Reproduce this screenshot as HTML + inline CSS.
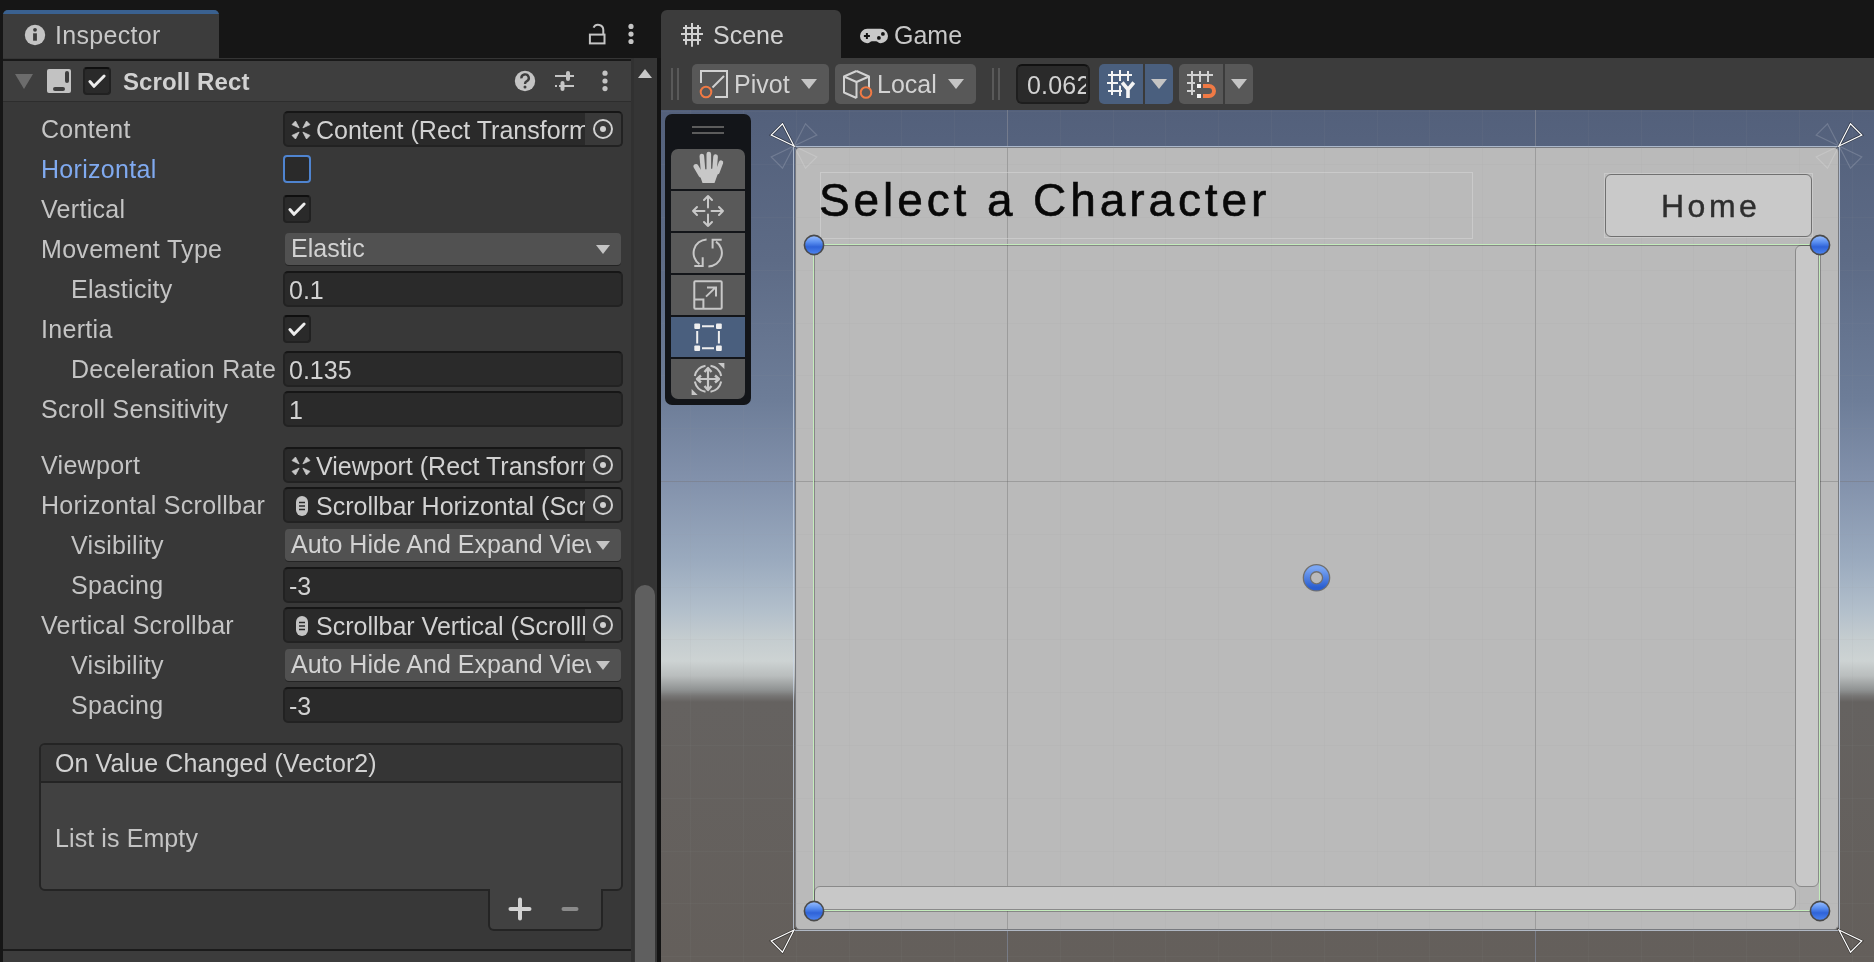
<!DOCTYPE html>
<html><head><meta charset="utf-8">
<style>
*{box-sizing:border-box;margin:0;padding:0}
html,body{width:1874px;height:962px;overflow:hidden;background:#161616;font-family:"Liberation Sans",sans-serif}
.a{position:absolute}
#root{position:absolute;left:0;top:0;width:1874px;height:962px;will-change:transform}
.t{position:absolute;height:40px;line-height:40px;font-size:25px;white-space:nowrap;color:#c4c4c4;letter-spacing:0.3px}
.lbl{left:41px}
.ind{left:71px}
.fld{position:absolute;left:283px;width:340px;height:36px;background:#2a2a2a;border:2px solid #222;border-top-color:#161616;border-radius:5px;overflow:hidden}
.fld .v{position:absolute;left:4px;top:-3px;height:40px;line-height:40px;font-size:25px;color:#d2d2d2;white-space:nowrap}
.obj .v{left:31px}
.pick{position:absolute;right:0;top:0;width:36px;height:32px;background:#393939}
.pick:before{content:"";position:absolute;left:8px;top:6px;width:20px;height:20px;border:2px solid #d0d0d0;border-radius:50%;box-sizing:border-box}
.pick:after{content:"";position:absolute;left:15px;top:13px;width:6px;height:6px;background:#d0d0d0;border-radius:50%}
.dd{position:absolute;left:285px;width:336px;height:32px;background:#515151;border-radius:4px;box-shadow:0 1px 0 #242424;overflow:hidden}
.dd .v{position:absolute;left:6px;top:-5px;height:40px;line-height:40px;font-size:25px;color:#d2d2d2;white-space:nowrap;width:300px;overflow:hidden}
.arr{position:absolute;width:0;height:0;border-left:7px solid transparent;border-right:7px solid transparent;border-top:9px solid #c4c4c4}
.dd .arr{left:311px;top:12px}
.cb{position:absolute;left:283px;width:28px;height:28px;background:#2a2a2a;border:2px solid #212121;border-top-color:#0f0f0f;border-radius:4px}
.cb svg{position:absolute;left:0;top:0}
</style></head><body><div id="root">

<!-- ============ INSPECTOR ============ -->
<!-- tab -->
<div class="a" style="left:3px;top:10px;width:216px;height:48px;background:#3c3c3c;border-radius:5px 5px 0 0;overflow:hidden">
  <div class="a" style="left:0;top:0;width:216px;height:4px;background:#3a6190"></div>
</div>
<svg class="a" style="left:24px;top:24px" width="22" height="22" viewBox="0 0 22 22">
  <circle cx="11" cy="11" r="10.2" fill="#c4c4c4"/>
  <circle cx="11" cy="5.8" r="1.9" fill="#3c3c3c"/>
  <rect x="9.1" y="9.3" width="3.8" height="7.4" fill="#3c3c3c"/>
</svg>
<div class="t" style="left:55px;top:15px;color:#c8c8c8">Inspector</div>
<!-- lock -->
<svg class="a" style="left:586px;top:22px" width="22" height="24" viewBox="0 0 22 24">
  <rect x="3.9" y="12.6" width="14.6" height="8.8" fill="none" stroke="#c4c4c4" stroke-width="2"/>
  <path d="M7.5 5.6 A5.2 5.2 0 0 1 17.3 8 V12.6" fill="none" stroke="#c4c4c4" stroke-width="2"/>
</svg>
<!-- kebab tab -->
<svg class="a" style="left:626px;top:22px" width="10" height="24" viewBox="0 0 10 24">
  <circle cx="5" cy="4.4" r="2.6" fill="#c4c4c4"/><circle cx="5" cy="12.1" r="2.6" fill="#c4c4c4"/><circle cx="5" cy="19.5" r="2.6" fill="#c4c4c4"/>
</svg>

<!-- panel -->
<div class="a" style="left:3px;top:58px;width:628px;height:904px;background:#383838"></div>
<div class="a" style="left:3px;top:58px;width:628px;height:1px;background:#353535"></div>
<div class="a" style="left:3px;top:59px;width:628px;height:2px;background:#191919"></div>
<!-- header -->
<div class="a" style="left:3px;top:61px;width:628px;height:40px;background:#3e3e3e"></div>
<div class="a" style="left:3px;top:101px;width:628px;height:1px;background:#2d2d2d"></div>
<!-- scrollbar column -->
<div class="a" style="left:631px;top:58px;width:26px;height:904px;background:#353535"></div>
<div class="a" style="left:631px;top:58px;width:3px;height:904px;background:#313131"></div>
<div class="arr" style="left:638px;top:69px;border-top:0;border-bottom:9px solid #c8c8c8"></div>
<div class="a" style="left:635px;top:585px;width:20px;height:377px;background:#5f5f5f;border-radius:10px 10px 0 0"></div>
<!-- splitter -->
<div class="a" style="left:657px;top:58px;width:4px;height:904px;background:#131313"></div>

<!-- header content -->
<div class="a" style="left:15px;top:74px;width:0;height:0;border-left:9px solid transparent;border-right:9px solid transparent;border-top:15px solid #6c6c6c"></div>
<svg class="a" style="left:47px;top:69px" width="24" height="24" viewBox="0 0 24 24">
  <rect x="0" y="0" width="24" height="24" rx="2" fill="#c2c2c2"/>
  <rect x="18" y="2" width="4" height="12" rx="2" fill="#3e3e3e"/>
  <rect x="6" y="18" width="12" height="4" rx="2" fill="#3e3e3e"/>
</svg>
<div class="cb" style="left:83px;top:67px;width:28px;height:28px">
  <svg width="24" height="24" viewBox="0 0 24 24"><path d="M4.9 12.6 L9 17.3 L19.1 7" fill="none" stroke="#ececec" stroke-width="3" stroke-linecap="round" stroke-linejoin="round"/></svg>
</div>
<div class="t" style="left:123px;top:62px;font-weight:bold;font-size:24px;letter-spacing:0.1px;color:#d2d2d2">Scroll Rect</div>
<svg class="a" style="left:514px;top:70px" width="22" height="22" viewBox="0 0 22 22">
  <circle cx="11" cy="11" r="10.2" fill="#c4c4c4"/>
  <path d="M7.4 8.3 A3.7 3.6 0 1 1 12.6 11.3 C11.4 12 11 12.6 11 14" fill="none" stroke="#3e3e3e" stroke-width="2.4"/>
  <circle cx="11" cy="17" r="1.5" fill="#3e3e3e"/>
</svg>
<svg class="a" style="left:554px;top:70px" width="22" height="22" viewBox="0 0 22 22">
  <path d="M1 6 H20 M1 16 H20" stroke="#c4c4c4" stroke-width="2"/>
  <rect x="12" y="1" width="4" height="10" rx="2" fill="#c4c4c4"/>
  <rect x="6.5" y="11" width="4" height="10" rx="2" fill="#c4c4c4"/>
  <rect x="3" y="15" width="2" height="2" fill="#3e3e3e"/>
</svg>
<svg class="a" style="left:600px;top:70px" width="10" height="22" viewBox="0 0 10 22">
  <circle cx="5" cy="3.2" r="2.6" fill="#c4c4c4"/><circle cx="5" cy="11" r="2.6" fill="#c4c4c4"/><circle cx="5" cy="18.6" r="2.6" fill="#c4c4c4"/>
</svg>

<!-- rows -->
<div class="t lbl" style="top:109px">Content</div>
<div class="fld obj" style="top:111px"><svg class="a" style="left:6px;top:7px" width="20" height="20" viewBox="0 0 20 20"><path d="M4.5 1 L1 4.6 L8.1 7.9 Z M15.5 1 L19 4.6 L11.9 7.9 Z M1 15.4 L4.5 19 L8.1 12.1 Z M19 15.4 L15.5 19 L11.9 12.1 Z" fill="#c8c8c8" stroke="#c8c8c8" stroke-width="0.8" stroke-linejoin="round"/></svg><div class="v">Content (Rect Transform)</div><div class="pick"></div></div>

<div class="t lbl" style="top:149px;color:#80aaf0">Horizontal</div>
<div class="cb" style="top:155px;border:2px solid #4f84d0;background:#2a2a2a"></div>

<div class="t lbl" style="top:189px">Vertical</div>
<div class="cb" style="top:195px"><svg width="24" height="24" viewBox="0 0 24 24"><path d="M4.9 12.6 L9 17.3 L19.1 7" fill="none" stroke="#ececec" stroke-width="3" stroke-linecap="round" stroke-linejoin="round"/></svg></div>

<div class="t lbl" style="top:229px">Movement Type</div>
<div class="dd" style="top:233px"><div class="v">Elastic</div><div class="arr"></div></div>

<div class="t ind" style="top:269px">Elasticity</div>
<div class="fld" style="top:271px"><div class="v">0.1</div></div>

<div class="t lbl" style="top:309px">Inertia</div>
<div class="cb" style="top:315px"><svg width="24" height="24" viewBox="0 0 24 24"><path d="M4.9 12.6 L9 17.3 L19.1 7" fill="none" stroke="#ececec" stroke-width="3" stroke-linecap="round" stroke-linejoin="round"/></svg></div>

<div class="t ind" style="top:349px">Deceleration Rate</div>
<div class="fld" style="top:351px"><div class="v">0.135</div></div>

<div class="t lbl" style="top:389px">Scroll Sensitivity</div>
<div class="fld" style="top:391px"><div class="v">1</div></div>

<div class="t lbl" style="top:445px">Viewport</div>
<div class="fld obj" style="top:447px"><svg class="a" style="left:6px;top:7px" width="20" height="20" viewBox="0 0 20 20"><path d="M4.5 1 L1 4.6 L8.1 7.9 Z M15.5 1 L19 4.6 L11.9 7.9 Z M1 15.4 L4.5 19 L8.1 12.1 Z M19 15.4 L15.5 19 L11.9 12.1 Z" fill="#c8c8c8" stroke="#c8c8c8" stroke-width="0.8" stroke-linejoin="round"/></svg><div class="v">Viewport (Rect Transform)</div><div class="pick"></div></div>

<div class="t lbl" style="top:485px">Horizontal Scrollbar</div>
<div class="fld obj" style="top:487px"><svg class="a" style="left:10px;top:6px" width="14" height="22" viewBox="0 0 14 22"><rect x="1" y="1" width="12" height="20" rx="6" fill="#c4c4c4"/><path d="M4 7.5 H10 M4 11 H10 M4 14.5 H10" stroke="#2a2a2a" stroke-width="1.6"/></svg><div class="v">Scrollbar Horizontal (Scrollbar)</div><div class="pick"></div></div>

<div class="t ind" style="top:525px">Visibility</div>
<div class="dd" style="top:529px"><div class="v">Auto Hide And Expand Viewport</div><div class="arr"></div></div>

<div class="t ind" style="top:565px">Spacing</div>
<div class="fld" style="top:567px"><div class="v">-3</div></div>

<div class="t lbl" style="top:605px">Vertical Scrollbar</div>
<div class="fld obj" style="top:607px"><svg class="a" style="left:10px;top:6px" width="14" height="22" viewBox="0 0 14 22"><rect x="1" y="1" width="12" height="20" rx="6" fill="#c4c4c4"/><path d="M4 7.5 H10 M4 11 H10 M4 14.5 H10" stroke="#2a2a2a" stroke-width="1.6"/></svg><div class="v">Scrollbar Vertical (Scrollbar)</div><div class="pick"></div></div>

<div class="t ind" style="top:645px">Visibility</div>
<div class="dd" style="top:649px"><div class="v">Auto Hide And Expand Viewport</div><div class="arr"></div></div>

<div class="t ind" style="top:685px">Spacing</div>
<div class="fld" style="top:687px"><div class="v">-3</div></div>

<!-- event list -->
<div class="a" style="left:39px;top:743px;width:584px;height:148px;background:#414141;border:2px solid #242424;border-radius:6px;overflow:hidden">
  <div class="a" style="left:0;top:0;width:580px;height:38px;background:#353535;border-bottom:2px solid #242424"></div>
</div>
<div class="t" style="left:55px;top:743px;color:#d2d2d2;letter-spacing:0.1px">On Value Changed (Vector2)</div>
<div class="t" style="left:55px;top:818px;letter-spacing:0.1px">List is Empty</div>
<div class="a" style="left:488px;top:889px;width:115px;height:42px;background:#414141;border:2px solid #242424;border-top:0;border-radius:0 0 6px 6px"></div>
<svg class="a" style="left:508px;top:897px" width="24" height="24" viewBox="0 0 24 24"><path d="M2.5 12 H21.5 M12 2.5 V21.5" stroke="#d2d2d2" stroke-width="4" stroke-linecap="round"/></svg>
<svg class="a" style="left:560px;top:905px" width="20" height="8" viewBox="0 0 20 8"><path d="M3.5 4 H16.5" stroke="#8a8a8a" stroke-width="4" stroke-linecap="round"/></svg>
<div class="a" style="left:3px;top:949px;width:628px;height:2px;background:#1b1b1b"></div>
<div class="a" style="left:3px;top:951px;width:628px;height:11px;background:#3c3c3c"></div>


<!-- ============ SCENE ============ -->
<div class="a" style="left:661px;top:10px;width:180px;height:48px;background:#3c3c3c;border-radius:6px 6px 0 0"></div>
<svg class="a" style="left:676px;top:18px" width="32" height="32" viewBox="0 0 32 32">
  <path d="M10 7 V26.8 M16 5 V28.8 M22 7 V26.8 M7 10 H25 M5 16 H27 M7 22 H25" stroke="#d2d2d2" stroke-width="2"/>
</svg>
<div class="t" style="left:713px;top:15px;color:#d2d2d2;letter-spacing:0">Scene</div>
<svg class="a" style="left:858px;top:27px" width="32" height="18" viewBox="0 0 32 18">
  <path d="M9.2 1.8 H22.8 A7.2 7.2 0 0 1 22.8 16.2 C20.5 16.2 19.5 14.2 18 14.2 H14 C12.5 14.2 11.5 16.2 9.2 16.2 A7.2 7.2 0 0 1 9.2 1.8 Z" fill="#c8c8c8"/>
  <path d="M5.9 9 H11.9 M8.9 6 V12" stroke="#111" stroke-width="2"/>
  <circle cx="24.9" cy="6.9" r="1.9" fill="#111"/><circle cx="20.9" cy="10.9" r="1.9" fill="#111"/>
</svg>
<div class="t" style="left:894px;top:15px;color:#c8c8c8;letter-spacing:0">Game</div>

<!-- toolbar -->
<div class="a" style="left:661px;top:58px;width:1213px;height:52px;background:#3c3c3c"></div>
<div class="a" style="left:671px;top:68px;width:2px;height:32px;background:#595959"></div>
<div class="a" style="left:677px;top:68px;width:2px;height:32px;background:#595959"></div>
<div class="a" style="left:992px;top:68px;width:2px;height:32px;background:#595959"></div>
<div class="a" style="left:998px;top:68px;width:2px;height:32px;background:#595959"></div>

<div class="a" style="left:692px;top:64px;width:137px;height:40px;background:#585858;border-radius:5px"></div>
<svg class="a" style="left:692px;top:64px" width="137" height="40" viewBox="0 0 137 40">
  <path d="M9 19 V7 H35 V33 H23" fill="none" stroke="#d2d2d2" stroke-width="2"/>
  <path d="M20.5 23.5 L32 12" stroke="#d2d2d2" stroke-width="2"/>
  <circle cx="14" cy="28" r="5.3" fill="none" stroke="#f07a45" stroke-width="2"/>
</svg>
<div class="t" style="left:734px;top:64px;color:#d2d2d2;letter-spacing:0">Pivot</div>
<div class="arr" style="left:801px;top:79px;border-left-width:8px;border-right-width:8px;border-top-width:10px"></div>

<div class="a" style="left:835px;top:64px;width:141px;height:40px;background:#585858;border-radius:5px"></div>
<svg class="a" style="left:835px;top:64px" width="40" height="40" viewBox="0 0 40 40">
  <path d="M21.5 7 L34 12.5 V25 M21.5 7 L9 12.5 V28.5 L21.5 34 M9 12.5 L21.5 18 L34 12.5 M21.5 18 V34" fill="none" stroke="#d2d2d2" stroke-width="2" stroke-linejoin="round"/>
  <circle cx="31" cy="28.5" r="5.3" fill="#585858" stroke="#f07a45" stroke-width="2"/>
</svg>
<div class="t" style="left:877px;top:64px;color:#d2d2d2;letter-spacing:0">Local</div>
<div class="arr" style="left:948px;top:79px;border-left-width:8px;border-right-width:8px;border-top-width:10px"></div>

<div class="a" style="left:1016px;top:64px;width:74px;height:40px;background:#2a2a2a;border:2px solid #1e1e1e;border-top-color:#111;border-radius:6px;overflow:hidden">
  <div class="a" style="left:9px;top:-1px;height:40px;line-height:40px;font-size:25px;color:#d2d2d2;white-space:nowrap;width:59px;overflow:hidden;letter-spacing:0.2px">0.0625</div>
</div>

<div class="a" style="left:1099px;top:64px;width:44px;height:40px;background:#4a5f7e;border-radius:5px 0 0 5px"></div>
<div class="a" style="left:1143px;top:64px;width:2px;height:40px;background:#3a3a3a"></div>
<div class="a" style="left:1145px;top:64px;width:28px;height:40px;background:#4a5f7e;border-radius:0 5px 5px 0"></div>
<svg class="a" style="left:1099px;top:64px" width="44" height="40" viewBox="0 0 44 40">
  <path d="M13 7 V31 M21 6 V17 M21 21.5 V32 M29 7 V17 M9 11 H33 M8 19 H19 M9 27 H23" stroke="#f4f4f4" stroke-width="2"/>
  <path d="M23.2 18.5 L29 25.5 L34.8 18.5 M29 25.5 V34" fill="none" stroke="#4a5f7e" stroke-width="6.4"/>
  <path d="M23.2 18.5 L29 25.5 L34.8 18.5 M29 25.5 V34" fill="none" stroke="#f4f4f4" stroke-width="3.6"/>
</svg>
<div class="arr" style="left:1151px;top:79px;border-left-width:8px;border-right-width:8px;border-top-width:10px"></div>

<div class="a" style="left:1179px;top:64px;width:44px;height:40px;background:#585858;border-radius:5px 0 0 5px"></div>
<div class="a" style="left:1223px;top:64px;width:2px;height:40px;background:#3c3c3c"></div>
<div class="a" style="left:1225px;top:64px;width:28px;height:40px;background:#585858;border-radius:0 5px 5px 0"></div>
<svg class="a" style="left:1179px;top:64px" width="44" height="40" viewBox="0 0 44 40">
  <path d="M13 7 V31 M21 7 V18 M29 7 V18 M8 11 H34 M8 19 H16 M8 27 H16" stroke="#d2d2d2" stroke-width="2"/>
  <rect x="18" y="20" width="4" height="4" fill="#f4f4f4"/><rect x="18" y="30" width="4" height="4" fill="#f4f4f4"/>
  <path d="M24 22 H30 A5 5 0 0 1 30 32 H24" fill="none" stroke="#f07a45" stroke-width="4"/>
</svg>
<div class="arr" style="left:1231px;top:79px;border-left-width:8px;border-right-width:8px;border-top-width:10px"></div>

<!-- scene view -->
<div class="a" style="left:661px;top:110px;width:1213px;height:852px;overflow:hidden;background:linear-gradient(to bottom,#53607b 0px,#5d6b86 150px,#6d7d98 290px,#8291ab 370px,#9aaabe 450px,#b2bfcb 500px,#c4cccf 528px,#cdd3d3 551px,#b9bdbd 566px,#8f9292 580px,#767574 586px,#656260 592px,#645f5b 852px)">
</div>


<!-- canvas panel -->
<div class="a" style="left:795px;top:147px;width:1044px;height:783px;background:#bababa;border:1px solid rgba(40,45,55,0.45);border-radius:5px"></div>
<div class="a" style="left:793px;top:146px;width:1047px;height:785px;border:1px solid rgba(200,212,230,0.75)"></div>
<!-- grid -->
<div class="a" style="left:690px;top:110px;width:1px;height:852px;background:rgba(150,150,150,0.07)"></div>
<div class="a" style="left:743px;top:110px;width:1px;height:852px;background:rgba(150,150,150,0.07)"></div>
<div class="a" style="left:796px;top:110px;width:1px;height:852px;background:rgba(150,150,150,0.07)"></div>
<div class="a" style="left:849px;top:110px;width:1px;height:852px;background:rgba(150,150,150,0.07)"></div>
<div class="a" style="left:901px;top:110px;width:1px;height:852px;background:rgba(150,150,150,0.07)"></div>
<div class="a" style="left:954px;top:110px;width:1px;height:852px;background:rgba(150,150,150,0.07)"></div>
<div class="a" style="left:1007px;top:110px;width:1px;height:36px;background:rgba(124,130,145,0.8)"></div>
<div class="a" style="left:1007px;top:931px;width:1px;height:31px;background:rgba(124,130,145,0.8)"></div>
<div class="a" style="left:1007px;top:148px;width:1px;height:781px;background:rgba(100,100,100,0.35)"></div>
<div class="a" style="left:1060px;top:110px;width:1px;height:852px;background:rgba(150,150,150,0.07)"></div>
<div class="a" style="left:1113px;top:110px;width:1px;height:852px;background:rgba(150,150,150,0.07)"></div>
<div class="a" style="left:1165px;top:110px;width:1px;height:852px;background:rgba(150,150,150,0.07)"></div>
<div class="a" style="left:1218px;top:110px;width:1px;height:852px;background:rgba(150,150,150,0.07)"></div>
<div class="a" style="left:1271px;top:110px;width:1px;height:852px;background:rgba(150,150,150,0.07)"></div>
<div class="a" style="left:1324px;top:110px;width:1px;height:852px;background:rgba(150,150,150,0.07)"></div>
<div class="a" style="left:1377px;top:110px;width:1px;height:852px;background:rgba(150,150,150,0.07)"></div>
<div class="a" style="left:1429px;top:110px;width:1px;height:852px;background:rgba(150,150,150,0.07)"></div>
<div class="a" style="left:1482px;top:110px;width:1px;height:852px;background:rgba(150,150,150,0.07)"></div>
<div class="a" style="left:1535px;top:110px;width:1px;height:36px;background:rgba(124,130,145,0.8)"></div>
<div class="a" style="left:1535px;top:931px;width:1px;height:31px;background:rgba(124,130,145,0.8)"></div>
<div class="a" style="left:1535px;top:148px;width:1px;height:781px;background:rgba(100,100,100,0.35)"></div>
<div class="a" style="left:1588px;top:110px;width:1px;height:852px;background:rgba(150,150,150,0.07)"></div>
<div class="a" style="left:1641px;top:110px;width:1px;height:852px;background:rgba(150,150,150,0.07)"></div>
<div class="a" style="left:1693px;top:110px;width:1px;height:852px;background:rgba(150,150,150,0.07)"></div>
<div class="a" style="left:1746px;top:110px;width:1px;height:852px;background:rgba(150,150,150,0.07)"></div>
<div class="a" style="left:1799px;top:110px;width:1px;height:852px;background:rgba(150,150,150,0.07)"></div>
<div class="a" style="left:1852px;top:110px;width:1px;height:852px;background:rgba(150,150,150,0.07)"></div>
<div class="a" style="left:661px;top:111px;width:1213px;height:1px;background:rgba(150,150,150,0.07)"></div>
<div class="a" style="left:661px;top:164px;width:1213px;height:1px;background:rgba(150,150,150,0.07)"></div>
<div class="a" style="left:661px;top:217px;width:1213px;height:1px;background:rgba(150,150,150,0.07)"></div>
<div class="a" style="left:661px;top:270px;width:1213px;height:1px;background:rgba(150,150,150,0.07)"></div>
<div class="a" style="left:661px;top:323px;width:1213px;height:1px;background:rgba(150,150,150,0.07)"></div>
<div class="a" style="left:661px;top:375px;width:1213px;height:1px;background:rgba(150,150,150,0.07)"></div>
<div class="a" style="left:661px;top:428px;width:1213px;height:1px;background:rgba(150,150,150,0.07)"></div>
<div class="a" style="left:661px;top:481px;width:132px;height:1px;background:rgba(124,130,145,0.8)"></div>
<div class="a" style="left:1840px;top:481px;width:34px;height:1px;background:rgba(124,130,145,0.8)"></div>
<div class="a" style="left:796px;top:481px;width:1042px;height:1px;background:rgba(100,100,100,0.35)"></div>
<div class="a" style="left:661px;top:534px;width:1213px;height:1px;background:rgba(150,150,150,0.07)"></div>
<div class="a" style="left:661px;top:587px;width:1213px;height:1px;background:rgba(150,150,150,0.07)"></div>
<div class="a" style="left:661px;top:639px;width:1213px;height:1px;background:rgba(150,150,150,0.07)"></div>
<div class="a" style="left:661px;top:692px;width:1213px;height:1px;background:rgba(150,150,150,0.07)"></div>
<div class="a" style="left:661px;top:745px;width:1213px;height:1px;background:rgba(150,150,150,0.07)"></div>
<div class="a" style="left:661px;top:798px;width:1213px;height:1px;background:rgba(150,150,150,0.07)"></div>
<div class="a" style="left:661px;top:851px;width:1213px;height:1px;background:rgba(150,150,150,0.07)"></div>
<div class="a" style="left:661px;top:903px;width:1213px;height:1px;background:rgba(150,150,150,0.07)"></div>
<div class="a" style="left:661px;top:956px;width:1213px;height:1px;background:rgba(150,150,150,0.07)"></div>
<!-- title text rect -->
<div class="a" style="left:820px;top:172px;width:653px;height:67px;border:1px solid rgba(215,215,215,0.55)"></div>
<div class="a" style="left:819px;top:170px;height:60px;line-height:60px;font-size:46px;letter-spacing:3.9px;color:#080808;-webkit-text-stroke:0.6px #080808;white-space:nowrap">Select a Character</div>
<!-- home button -->
<div class="a" style="left:1604px;top:173px;width:209px;height:65px;border:1px solid rgba(215,215,215,0.55)"></div>
<div class="a" style="left:1605px;top:174px;width:207px;height:63px;background:#c9c9c9;border:1.5px solid #707070;border-radius:6px"></div>
<div class="a" style="left:1661px;top:186px;height:40px;line-height:40px;font-size:32px;letter-spacing:3.5px;color:#2e2e2e;-webkit-text-stroke:0.4px #2e2e2e;white-space:nowrap">Home</div>
<!-- scrollbars -->
<div class="a" style="left:1795px;top:245px;width:24px;height:642px;background:#c8c8c8;border:1px solid #8a8a8a;border-radius:6px"></div>
<div class="a" style="left:814px;top:886px;width:982px;height:24px;background:#c8c8c8;border:1px solid #8a8a8a;border-radius:6px"></div>
<svg class="a" style="left:661px;top:110px" width="1213" height="852" viewBox="661 110 1213 852">
  <defs>
    <linearGradient id="hg" x1="0" y1="0" x2="0" y2="1">
      <stop offset="0" stop-color="#9cc0ff"/><stop offset="0.35" stop-color="#5a8ff0"/><stop offset="0.6" stop-color="#2f63d8"/><stop offset="1" stop-color="#4f86f0"/>
    </linearGradient>
    <linearGradient id="pg" x1="0" y1="0" x2="0" y2="1">
      <stop offset="0" stop-color="#7aa6f4"/><stop offset="1" stop-color="#2a5ed0"/>
    </linearGradient>
  </defs>
  <path d="M814.5 245.5 H1820.5 V911.5 H814.5 Z" fill="none" stroke="#000" stroke-opacity="0.28" stroke-width="1"/><path d="M813.5 244.5 H1819.5 V910.5 H813.5 Z" fill="none" stroke="#c4ecbc" stroke-width="1"/>
  <path d="M794 146 L782.5 123.8 L771.2 135.0 Z" fill="none" stroke="#000" stroke-opacity="0.45" stroke-width="2.6"/><path d="M794 146 L782.5 123.8 L771.2 135.0 Z" fill="none" stroke="#ffffff" stroke-width="1.2"/><path d="M794 146 L805.5 123.8 L816.8 135.0 Z" fill="none" stroke="#ffffff" stroke-opacity="0.16" stroke-width="1.2"/><path d="M794 146 L782.5 168.2 L771.2 157.0 Z" fill="none" stroke="#ffffff" stroke-opacity="0.16" stroke-width="1.2"/><path d="M794 146 L805.5 168.2 L816.8 157.0 Z" fill="none" stroke="#ffffff" stroke-opacity="0.16" stroke-width="1.2"/><path d="M1839 146 L1827.5 123.8 L1816.2 135.0 Z" fill="none" stroke="#ffffff" stroke-opacity="0.16" stroke-width="1.2"/><path d="M1839 146 L1850.5 123.8 L1861.8 135.0 Z" fill="none" stroke="#000" stroke-opacity="0.45" stroke-width="2.6"/><path d="M1839 146 L1850.5 123.8 L1861.8 135.0 Z" fill="none" stroke="#ffffff" stroke-width="1.2"/><path d="M1839 146 L1827.5 168.2 L1816.2 157.0 Z" fill="none" stroke="#ffffff" stroke-opacity="0.16" stroke-width="1.2"/><path d="M1839 146 L1850.5 168.2 L1861.8 157.0 Z" fill="none" stroke="#ffffff" stroke-opacity="0.16" stroke-width="1.2"/><path d="M794 930 L782.5 952.2 L771.2 941.0 Z" fill="none" stroke="#000" stroke-opacity="0.45" stroke-width="2.6"/><path d="M794 930 L782.5 952.2 L771.2 941.0 Z" fill="none" stroke="#ffffff" stroke-width="1.2"/><path d="M1839 930 L1850.5 952.2 L1861.8 941.0 Z" fill="none" stroke="#000" stroke-opacity="0.45" stroke-width="2.6"/><path d="M1839 930 L1850.5 952.2 L1861.8 941.0 Z" fill="none" stroke="#ffffff" stroke-width="1.2"/>
  <circle cx="814" cy="245" r="9.6" fill="url(#hg)" stroke="#4a4a4a" stroke-width="1.6"/><circle cx="1820" cy="245" r="9.6" fill="url(#hg)" stroke="#4a4a4a" stroke-width="1.6"/><circle cx="814" cy="911" r="9.6" fill="url(#hg)" stroke="#4a4a4a" stroke-width="1.6"/><circle cx="1820" cy="911" r="9.6" fill="url(#hg)" stroke="#4a4a4a" stroke-width="1.6"/>
  <circle cx="1316.5" cy="577.8" r="9.6" fill="none" stroke="#707070" stroke-width="8.4"/>
  <circle cx="1316.5" cy="577.8" r="9.6" fill="none" stroke="url(#pg)" stroke-width="5.8"/>
</svg>

<!-- tool palette -->
<div class="a" style="left:665px;top:114px;width:86px;height:291px;background:#131519;border-radius:7px"></div>
<div class="a" style="left:692px;top:126px;width:32px;height:2px;background:#5c5c5c"></div>
<div class="a" style="left:692px;top:132px;width:32px;height:2px;background:#5c5c5c"></div>
<div class="a" style="left:671px;top:149px;width:74px;height:40px;background:#595959;border-radius:7px 7px 0 0"></div>
<div class="a" style="left:671px;top:191px;width:74px;height:40px;background:#595959"></div>
<div class="a" style="left:671px;top:233px;width:74px;height:40px;background:#595959"></div>
<div class="a" style="left:671px;top:275px;width:74px;height:40px;background:#595959"></div>
<div class="a" style="left:671px;top:317px;width:74px;height:40px;background:#4a5f7e"></div>
<div class="a" style="left:671px;top:359px;width:74px;height:40px;background:#595959;border-radius:0 0 7px 7px"></div>
<svg class="a" style="left:671px;top:149px" width="74" height="250" viewBox="0 0 74 250">
  <!-- hand -->
  <g stroke="#c8c8c8" stroke-linecap="round" fill="none">
    <path d="M25 17.5 L30 26" stroke-width="5"/>
    <path d="M30.8 7 L32 21" stroke-width="4.6"/>
    <path d="M37.8 5 L37.8 20" stroke-width="4.6"/>
    <path d="M44.6 7.5 L43.5 21" stroke-width="4.6"/>
    <path d="M50 13.5 L46.5 23" stroke-width="4.4"/>
  </g>
  <path d="M27 21 L49 19 L43.5 34 L31.5 34 Z" fill="#c8c8c8"/>
  <!-- move -->
  <g transform="translate(0,42)" stroke="#c8c8c8" stroke-width="2" fill="none" stroke-linecap="round" stroke-linejoin="round">
    <path d="M37 16.5 V5 M33 9 L37 5 L41 9"/>
    <path d="M37 23.5 V35 M33 31 L37 35 L41 31"/>
    <path d="M33.5 20 H22 M26 16 L22 20 L26 24"/>
    <path d="M40.5 20 H52 M48 16 L52 20 L48 24"/>
  </g>
  <!-- rotate -->
  <g transform="translate(0,84)" stroke="#c8c8c8" stroke-width="2" fill="none">
    <path d="M35.6 6.4 A13.6 13.6 0 0 0 28.5 31.2"/>
    <path d="M23.3 33 H31.7 V24.3"/>
    <path d="M37.4 33.4 A13.6 13.6 0 0 0 45 8.6"/>
    <path d="M50.7 6.7 H41.6 V15.4"/>
  </g>
  <!-- scale -->
  <g transform="translate(0,126)" stroke="#c8c8c8" stroke-width="2" fill="none">
    <rect x="23.3" y="6.3" width="27.4" height="27.5" rx="1"/>
    <path d="M23.3 24.6 H32.4 V33.8"/>
    <path d="M35 21.6 L44.6 12.4 M36 12.4 H45 V21.4"/>
  </g>
  <!-- rect -->
  <g transform="translate(0,168)">
    <rect x="23.3" y="6.4" width="5.8" height="5.6" rx="1" fill="#efefef"/>
    <rect x="45" y="6.4" width="5.8" height="5.6" rx="1" fill="#efefef"/>
    <rect x="23.3" y="28.4" width="5.8" height="5.6" rx="1" fill="#efefef"/>
    <rect x="45" y="28.4" width="5.8" height="5.6" rx="1" fill="#efefef"/>
    <path d="M31 9.2 H43 M31 31.2 H43 M26.2 14 V26.4 M47.9 14 V26.4" stroke="#efefef" stroke-width="2"/>
  </g>
  <!-- transform -->
  <g transform="translate(0,210)" fill="none" stroke="#c8c8c8" stroke-width="2">
    <path d="M23.8 17 A13.4 13.4 0 0 1 34.5 6.8"/>
    <path d="M39.5 6.8 A13.4 13.4 0 0 1 50.2 17"/>
    <path d="M50.2 22.5 A13.4 13.4 0 0 1 39.5 32.8"/>
    <path d="M34.5 32.8 A13.4 13.4 0 0 1 23.8 22.5"/>
    <path d="M37 10 V30 M27 20 H47" stroke-width="2.2"/>
    <path d="M33.5 13 L37 9 L40.5 13 M33.5 27 L37 31 L40.5 27 M30 16.5 L26 20 L30 23.5 M44 16.5 L48 20 L44 23.5" stroke-width="2.4" stroke-linejoin="round"/>
  </g>
  <path d="M47 214 L53.4 214 L53.4 220 Z" fill="#c8c8c8"/>
  <path d="M20.6 240 L20.6 246 L26.6 246 Z" fill="#c8c8c8"/>
</svg>

</div></body></html>
